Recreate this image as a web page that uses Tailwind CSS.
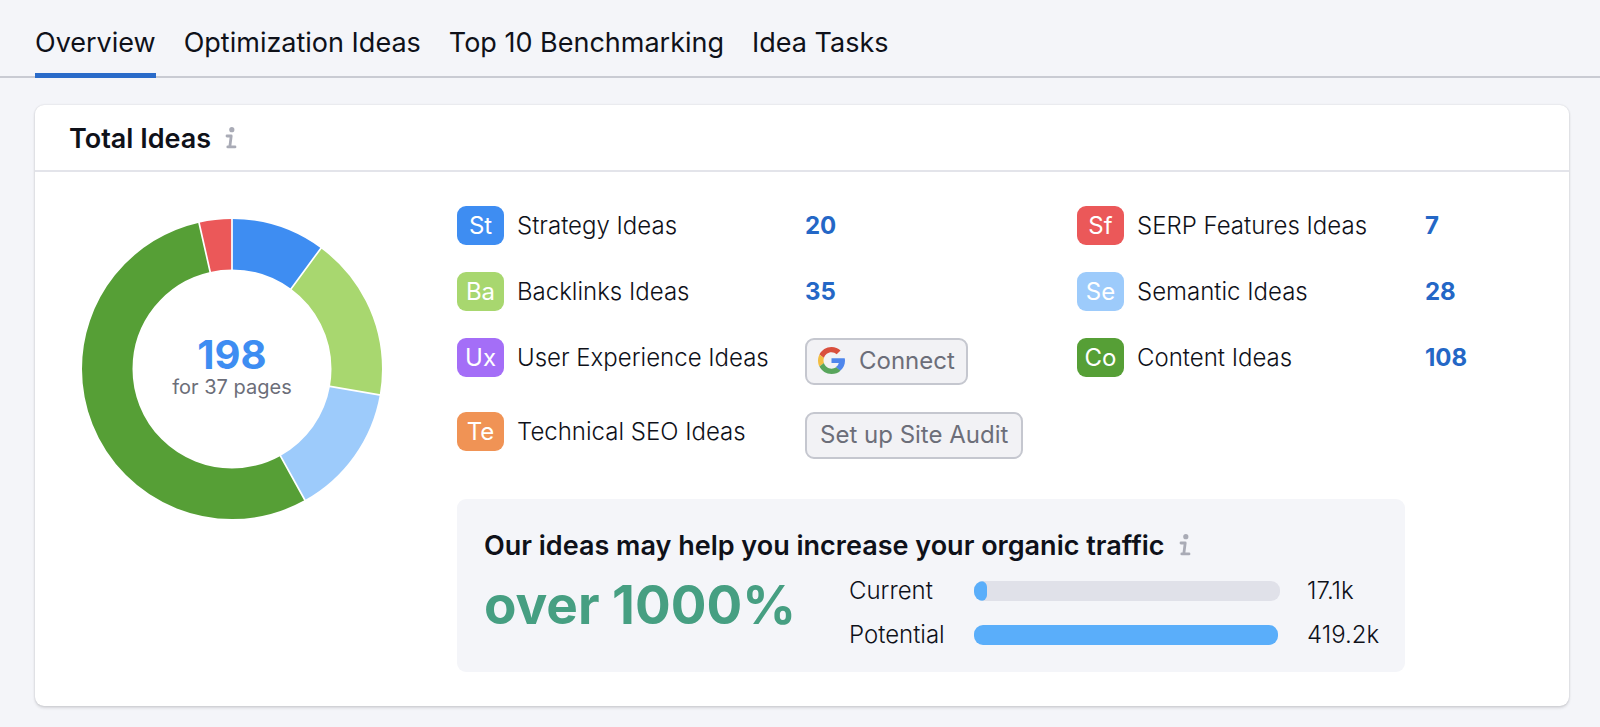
<!DOCTYPE html>
<html lang="en">
<head>
<meta charset="utf-8">
<meta name="viewport" content="width=device-width, initial-scale=1">
<title>On Page SEO Ideas – Overview</title>
<script src="https://cdn.jsdelivr.net/npm/@tailwindcss/browser@4"></script>
</head>
<body class="min-h-screen bg-[#f4f5f9] font-['Inter',sans-serif] text-[24px] leading-[39px] text-[#0f1119]">
<nav class="flex gap-7 border-b-2 border-[#c9cbd3] px-[35px] pt-[23px] text-[27px] leading-10" aria-label="Sections">
  <a href="#overview" aria-current="page" class="-mb-[2px] border-b-[5px] border-[#2a6bc9] pb-[10px]">Overview</a>
  <a href="#optimization">Optimization Ideas</a>
  <a href="#benchmarking">Top 10 Benchmarking</a>
  <a href="#tasks">Idea Tasks</a>
</nav>

<main class="pt-[27px] pr-[31px] pb-5 pl-[35px]">
  <section class="rounded-[9px] bg-white shadow-[0_0_2px_rgba(25,27,35,0.16),0_2px_3px_rgba(25,27,35,0.14)]">
    <header class="flex items-center gap-[14px] border-b-2 border-[#e3e4ea] px-[34px] pt-[14px] pb-3">
      <h1 class="text-[27px] font-semibold">Total Ideas</h1>
      <button type="button" aria-label="About total ideas" class="pb-[2px] text-[#a9abb6]">
        <svg class="block h-[22px] w-3" viewBox="0 0 12 22" fill="none" stroke="currentColor"><circle cx="6.8" cy="2.7" r="2.6" fill="currentColor" stroke="none"/><path d="M2 9H6.2L4.8 19.9M2.8 19.9H10" stroke-width="2.8" stroke-linecap="round" stroke-linejoin="round"/></svg>
      </button>
    </header>

    <div class="flex gap-[75px] pt-[34px] pr-[30px] pb-[34px] pl-[47px]">
      <figure class="mt-[13px] grid size-[300px] shrink-0 place-items-center">
        <svg class="col-start-1 row-start-1 size-full" viewBox="0 0 300 300" role="img" aria-label="Ideas by category">
          <g fill="none" stroke-width="50.5" transform="rotate(-90 150 150)">
            <circle cx="150" cy="150" r="124.75" pathLength="198" stroke="#3e8df2" stroke-dasharray="20 178"/>
            <circle cx="150" cy="150" r="124.75" pathLength="198" stroke="#a8d76f" stroke-dasharray="35 163" stroke-dashoffset="-20"/>
            <circle cx="150" cy="150" r="124.75" pathLength="198" stroke="#9dcbfb" stroke-dasharray="28 170" stroke-dashoffset="-55"/>
            <circle cx="150" cy="150" r="124.75" pathLength="198" stroke="#569f36" stroke-dasharray="108 90" stroke-dashoffset="-83"/>
            <circle cx="150" cy="150" r="124.75" pathLength="198" stroke="#eb5859" stroke-dasharray="7 191" stroke-dashoffset="-191"/>
          </g>
          <path d="M150 52V-1M208.4 70.7L239.5 28.4M246.5 167.1L298.7 176.2M197.7 235.6L223.4 282M128.4 54L116.8 2.7" stroke="#fff" stroke-width="1.7"/>
        </svg>
        <figcaption class="col-start-1 row-start-1 text-center">
          <strong class="block text-[40px] leading-9 font-bold text-[#3e8df2]">198</strong>
          <span class="block text-[20px] leading-7 text-[#6c6e79]">for 37 pages</span>
        </figcaption>
      </figure>

      <div class="min-w-0 flex-1">
        <div class="flex">
          <ul class="flex w-[620px] flex-col gap-[27px]">
            <li class="grid grid-cols-[47px_275px_auto] items-start gap-x-[13px]">
              <span class="rounded-[9px] bg-[#3e8df2] text-center text-white">St</span><span class="font-light">Strategy Ideas</span>
              <a href="#strategy" class="justify-self-start font-bold text-[#2467c6]">20</a>
            </li>
            <li class="grid grid-cols-[47px_275px_auto] items-start gap-x-[13px]">
              <span class="rounded-[9px] bg-[#a8d76f] text-center text-white">Ba</span><span class="font-light">Backlinks Ideas</span>
              <a href="#backlinks" class="justify-self-start font-bold text-[#2467c6]">35</a>
            </li>
            <li class="grid grid-cols-[47px_275px_auto] items-start gap-x-[13px]">
              <span class="rounded-[9px] bg-[#a46ef7] text-center text-white">Ux</span><span class="font-light">User Experience Ideas</span>
              <button type="button" class="flex h-[47px] items-center gap-[14px] justify-self-start rounded-[9px] border-2 border-[#c5c7cf] bg-[#f2f2f5] px-[11px] pb-[2px] text-[#6c6e79]">
                <svg class="size-[27px]" viewBox="0 0 48 48" aria-hidden="true"><path fill="#4f86ec" d="M47.5 20H24v8.6h13c-1 3.3-2.8 5.6-5.3 7.1l7 7.1C44.8 38.6 48 32 48 24.5c0-1.6-.2-3.1-.5-4.5z"/><path fill="#d94f3d" d="M24 9.5c3.54 0 6.71 1.22 9.21 3.6l6.85-6.85C35.9 2.38 30.47 0 24 0 14.62 0 6.51 5.38 2.56 13.22l7.98 6.19C12.43 13.72 17.74 9.5 24 9.5z"/><path fill="#f2bd42" d="M10.53 28.59c-.48-1.45-.76-2.99-.76-4.59s.27-3.14.76-4.59l-7.98-6.19C.92 16.46 0 20.12 0 24c0 3.88.92 7.54 2.56 10.78l7.97-6.19z"/><path fill="#58a55c" d="M24 48c6.48 0 11.93-2.13 15.89-5.81l-7.73-6c-2.15 1.45-4.92 2.3-8.16 2.3-6.26 0-11.57-4.22-13.47-9.91l-7.98 6.19C6.51 42.62 14.62 48 24 48z"/></svg>
                Connect
              </button>
            </li>
            <li class="grid grid-cols-[47px_275px_auto] items-start gap-x-[13px]">
              <span class="rounded-[9px] bg-[#f09355] text-center text-white">Te</span><span class="font-light">Technical SEO Ideas</span>
              <button type="button" class="flex h-[47px] items-center justify-self-start rounded-[9px] border-2 border-[#c5c7cf] bg-[#f2f2f5] px-[13px] pb-[2px] text-[#6c6e79]">Set up Site Audit</button>
            </li>
          </ul>
          <ul class="flex flex-1 flex-col gap-[27px]">
            <li class="grid grid-cols-[47px_275px_auto] items-start gap-x-[13px]">
              <span class="rounded-[9px] bg-[#eb5859] text-center text-white">Sf</span><span class="font-light">SERP Features Ideas</span>
              <a href="#serp" class="justify-self-start font-bold text-[#2467c6]">7</a>
            </li>
            <li class="grid grid-cols-[47px_275px_auto] items-start gap-x-[13px]">
              <span class="rounded-[9px] bg-[#9dcbfb] text-center text-white">Se</span><span class="font-light">Semantic Ideas</span>
              <a href="#semantic" class="justify-self-start font-bold text-[#2467c6]">28</a>
            </li>
            <li class="grid grid-cols-[47px_275px_auto] items-start gap-x-[13px]">
              <span class="rounded-[9px] bg-[#569f36] text-center text-white">Co</span><span class="font-light">Content Ideas</span>
              <a href="#content" class="justify-self-start font-bold text-[#2467c6]">108</a>
            </li>
          </ul>
        </div>

        <section class="mt-10 max-w-[948px] rounded-[9px] bg-[#f4f5f9] px-[27px] pt-[27px] pb-[18px]">
          <div class="flex items-center gap-[14px]">
            <h2 class="text-[27px] font-semibold">Our ideas may help you increase your organic traffic</h2>
            <button type="button" aria-label="About the traffic estimate" class="pb-[2px] text-[#a9abb6]">
              <svg class="block h-[22px] w-3" viewBox="0 0 12 22" fill="none" stroke="currentColor"><circle cx="6.8" cy="2.7" r="2.6" fill="currentColor" stroke="none"/><path d="M2 9H6.2L4.8 19.9M2.8 19.9H10" stroke-width="2.8" stroke-linecap="round" stroke-linejoin="round"/></svg>
            </button>
          </div>
          <div class="flex items-start">
            <p class="w-[365px] text-[53px] leading-[80px] font-bold text-[#469f82]">over 1000%</p>
            <dl class="grid flex-1 grid-cols-[125px_1fr_71px] items-center gap-y-[5px] pt-[6px] font-light">
              <dt>Current</dt>
              <dd class="mr-[27px] h-5 overflow-hidden rounded-[9px] bg-[#e0e1e9]"><div class="h-full rounded-r-[6px] bg-[#5aaefa]" style="width:4.1%"></div></dd>
              <dd>17.1k</dd>
              <dt>Potential</dt>
              <dd class="mr-[27px] h-5"><div class="h-full rounded-[9px] bg-[#5aaefa]" style="width:99.2%"></div></dd>
              <dd>419.2k</dd>
            </dl>
          </div>
        </section>
      </div>
    </div>
  </section>
</main>
</body>
</html>
